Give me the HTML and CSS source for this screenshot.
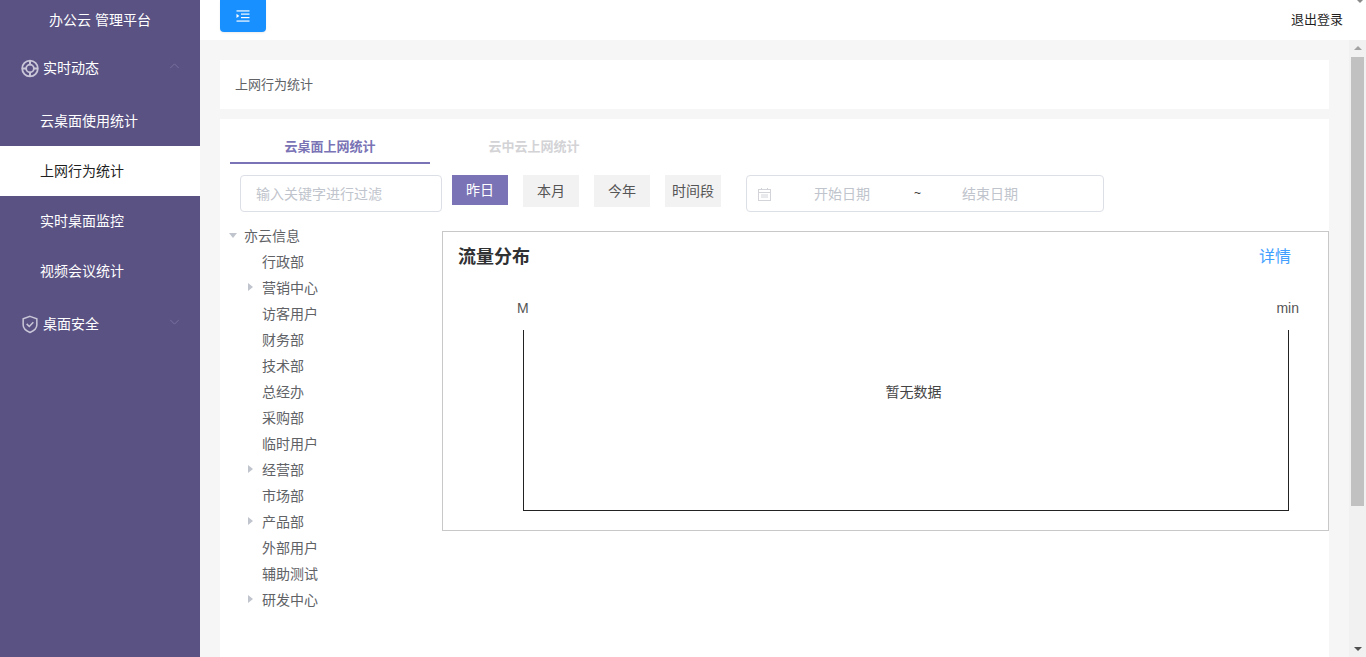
FILE: index.html
```html
<!DOCTYPE html>
<html lang="zh-CN">
<head>
<meta charset="utf-8">
<title>上网行为统计</title>
<link rel="stylesheet" href="styles.css">
</head>
<body>
<div class="app">
  <aside class="sidebar">
    <div class="brand">办公云 管理平台</div>
    <div class="group-title">
      <svg class="group-icon" viewBox="0 0 20 20" fill="none" stroke="currentColor">
        <circle cx="10" cy="10" r="8.700" stroke-width="2"/>
        <circle cx="10" cy="10" r="4.300" stroke-width="2"/>
        <path d="M10 1.500V6.500M10 13.500v5M1.500 10H6.500M13.500 10h5" stroke-width="2.200"/>
      </svg>
      <span class="group-label">实时动态</span>
      <svg class="chevron" viewBox="0 0 12 7" fill="none" stroke="currentColor"><path d="M1 6l5-5 5 5"/></svg>
    </div>
    <div class="menu-item">云桌面使用统计</div>
    <div class="menu-item active">上网行为统计</div>
    <div class="menu-item">实时桌面监控</div>
    <div class="menu-item">视频会议统计</div>
    <div class="group-title">
      <svg class="group-icon" viewBox="0 0 20 20" fill="none" stroke="currentColor" stroke-width="1.700">
        <path d="M10 1l7.600 2.600v7c0 3.900-3.400 6.500-7.600 8.300-4.200-1.800-7.600-4.400-7.600-8.300v-7z"/>
        <path d="M6.300 9.300l2.900 2.900 4.500-4.600"/>
      </svg>
      <span class="group-label">桌面安全</span>
      <svg class="chevron" viewBox="0 0 12 7" fill="none" stroke="currentColor"><path d="M1 1l5 5 5-5"/></svg>
    </div>
  </aside>

  <div class="main">
    <header class="topbar">
      <button class="toggle" type="button" aria-label="折叠菜单">
        <svg viewBox="0 0 14 12" width="14" height="12" fill="#fff">
          <rect x="0.500" y="0" width="13" height="1.800" opacity=".65"/>
          <rect x="5" y="3.500" width="8.500" height="1.200"/>
          <rect x="5" y="7" width="8.500" height="1.200"/>
          <rect x="0.500" y="10.200" width="13" height="1.800" opacity=".65"/>
          <path d="M0.500 3.800L3.300 5.900 0.500 8z"/>
        </svg>
      </button>
      <a class="logout">退出登录</a>
      <span class="corner-arrow"></span>
    </header>

    <div class="body">
      <main class="content">
        <div class="crumb">上网行为统计</div>
        <section class="card">
          <div class="tabs">
            <div class="tab current">云桌面上网统计</div>
            <div class="tab">云中云上网统计</div>
          </div>
          <div class="filters">
            <div class="search">输入关键字进行过滤</div>
            <button class="range selected" type="button">昨日</button>
            <button class="range" type="button">本月</button>
            <button class="range" type="button">今年</button>
            <button class="range" type="button">时间段</button>
            <div class="dates">
              <svg class="date-icon" viewBox="0 0 13 13" fill="none" stroke="#d2d4d9">
                <rect x="0.500" y="1.500" width="12" height="11"/>
                <path d="M3.500 0v2M9.500 0v2M0.500 4.500h12M3 7h7M3 9h7"/>
              </svg>
              <span class="date-start">开始日期</span>
              <span class="date-sep">~</span>
              <span class="date-end">结束日期</span>
            </div>
          </div>
          <div class="split">
            <ul class="tree">
              <li class="node root"><i class="caret open"></i>亦云信息</li>
              <li class="node"><i class="caret none"></i>行政部</li>
              <li class="node"><i class="caret"></i>营销中心</li>
              <li class="node"><i class="caret none"></i>访客用户</li>
              <li class="node"><i class="caret none"></i>财务部</li>
              <li class="node"><i class="caret none"></i>技术部</li>
              <li class="node"><i class="caret none"></i>总经办</li>
              <li class="node"><i class="caret none"></i>采购部</li>
              <li class="node"><i class="caret none"></i>临时用户</li>
              <li class="node"><i class="caret"></i>经营部</li>
              <li class="node"><i class="caret none"></i>市场部</li>
              <li class="node"><i class="caret"></i>产品部</li>
              <li class="node"><i class="caret none"></i>外部用户</li>
              <li class="node"><i class="caret none"></i>辅助测试</li>
              <li class="node"><i class="caret"></i>研发中心</li>
            </ul>
            <div class="panel">
              <div class="panel-head">
                <h2 class="panel-title">流量分布</h2>
                <a class="panel-link">详情</a>
              </div>
              <div class="axis-labels"><span>M</span><span>min</span></div>
              <div class="plot">暂无数据</div>
            </div>
          </div>
        </section>
      </main>
      <div class="scrollbar">
        <span class="arrow-up"></span>
        <div class="thumb"></div>
        <span class="arrow-down"></span>
      </div>
    </div>
  </div>
</div>
</body>
</html>
```
FILE: styles.css
```css
* { box-sizing: border-box; }
html, body { margin: 0; height: 100%; overflow: hidden; }
body {
  font-family: "Liberation Sans", "Noto Sans CJK SC", sans-serif;
  font-size: 14px;
  color: #606266;
  background: #fff;
}
.app { display: flex; height: 657px; }

.sidebar { width: 200px; flex: none; background: #5a5283; color: #fff; }
.brand { height: 40px; line-height: 40px; text-align: center; font-size: 14px; }
.group-title {
  height: 56px;
  display: flex;
  align-items: center;
  padding: 0 20px 2px 21px;
}
.group-icon { width: 18px; height: 19px; flex: none; color: #c9c6d8; margin-top: 2px; }
.group-label { margin-left: 4px; flex: 1; }
.chevron { width: 11px; height: 6px; flex: none; color: #7d76a1; margin-top: -2px; }
.menu-item { height: 50px; line-height: 50px; padding-left: 40px; }
.menu-item.active { background: #fff; color: #1f1f1f; }

.main { flex: 1; min-width: 0; display: flex; flex-direction: column; }
.topbar {
  height: 40px;
  flex: none;
  position: relative;
  display: flex;
  justify-content: space-between;
  align-items: flex-start;
  padding: 0 23px 0 20px;
  background: #fff;
}
.toggle {
  width: 46px;
  height: 32px;
  padding: 0;
  border: 0;
  border-radius: 0 0 4px 4px;
  background: #1890ff;
  display: flex;
  align-items: center;
  justify-content: center;
  box-shadow: 0 1px 2px rgba(0, 0, 0, .08);
}
.logout { margin-top: 11px; line-height: 17px; font-size: 13px; color: #1f1f1f; }
.corner-arrow {
  position: absolute;
  top: 0;
  right: 3px;
  border-left: 3px solid transparent;
  border-right: 3px solid transparent;
  border-top: 3px solid #8a8a8a;
}

.body { flex: 1; min-height: 0; display: flex; }
.content {
  flex: 1;
  min-width: 0;
  padding: 20px 20px 0;
  background: #f6f6f6;
  display: flex;
  flex-direction: column;
  gap: 10px;
}
.crumb {
  height: 49px;
  line-height: 50px;
  padding-left: 15px;
  background: #fff;
  font-size: 13px;
}
.card { flex: 1; background: #fff; padding-top: 10px; }

.tabs { display: flex; padding-left: 10px; gap: 4px; }
.tab {
  width: 200px;
  height: 35px;
  line-height: 36px;
  text-align: center;
  font-size: 13px;
  font-weight: 700;
  color: #d3d3d6;
}
.tab.current { color: #7a73b5; border-bottom: 2px solid #7a73b5; }

.filters { display: flex; align-items: flex-start; margin-top: 11px; padding-left: 20px; }
.search {
  width: 202px;
  height: 37px;
  line-height: 37px;
  padding-left: 15px;
  margin-right: 10px;
  border: 1px solid #dcdfe6;
  border-radius: 4px;
  color: #c0c4cc;
}
.range {
  width: 56px;
  height: 32px;
  margin-right: 15px;
  padding: 0 0 2px;
  border: 0;
  background: #f2f2f2;
  color: #555;
  font: inherit;
}
.range.selected { height: 30px; background: #7a73b5; color: #fff; }
.dates {
  width: 358px;
  height: 37px;
  margin-left: 10px;
  display: flex;
  align-items: center;
  padding: 0 0 2px 11px;
  border: 1px solid #dcdfe6;
  border-radius: 4px;
  color: #c0c4cc;
}
.date-icon { width: 13px; height: 13px; flex: none; margin: 4px 1px 0 0; }
.date-start { margin-left: 42px; }
.date-sep { margin-left: 44px; width: 48px; color: #333; font-size: 12px; }

.split { display: flex; margin-top: 19px; }
.tree { width: 222px; flex: none; margin: -8px 0 0; padding: 0 0 0 9px; list-style: none; }
.node { height: 26px; line-height: 26px; display: flex; align-items: center; padding-left: 19px; }
.node.root { padding-left: 0; }
.caret {
  width: 0;
  height: 0;
  margin: -3px 9px 0 0;
  border-top: 4px solid transparent;
  border-bottom: 4px solid transparent;
  border-left: 5px solid #c0c4cc;
}
.caret.open {
  margin: -2px 7px 0 0;
  border-left: 4px solid transparent;
  border-right: 4px solid transparent;
  border-top: 5px solid #c0c4cc;
  border-bottom: 0;
}
.caret.none { border-left-color: transparent; }

.panel { flex: 1; height: 300px; border: 1px solid #c8c8c8; }
.panel-head {
  display: flex;
  justify-content: space-between;
  align-items: center;
  padding: 10px 37px 0 15px;
  height: 36px;
}
.panel-title { margin: 0; font-size: 18px; font-weight: 700; color: #303133; }
.panel-link { font-size: 16px; color: #409eff; }
.axis-labels {
  display: flex;
  justify-content: space-between;
  margin-top: 31px;
  padding: 0 29px 0 74px;
  height: 31px;
  line-height: 18px;
  font-size: 14px;
  color: #555;
}
.plot {
  height: 181px;
  margin: 0 39px 0 80px;
  padding: 52px 0 0 15px;
  border: 1px solid #222;
  border-top: 0;
  text-align: center;
  line-height: 20px;
  color: #444;
}

.scrollbar {
  width: 17px;
  flex: none;
  background: #f1f1f1;
  display: flex;
  flex-direction: column;
  align-items: center;
  padding-top: 6px;
}
.arrow-up {
  border-left: 4px solid transparent;
  border-right: 4px solid transparent;
  border-bottom: 4px solid #a3a3a3;
}
.thumb { width: 13px; height: 449px; margin-top: 7px; background: #c1c1c1; }
.arrow-down {
  margin-top: auto;
  margin-bottom: 6px;
  border-left: 4px solid transparent;
  border-right: 4px solid transparent;
  border-top: 4px solid #505050;
}
```
